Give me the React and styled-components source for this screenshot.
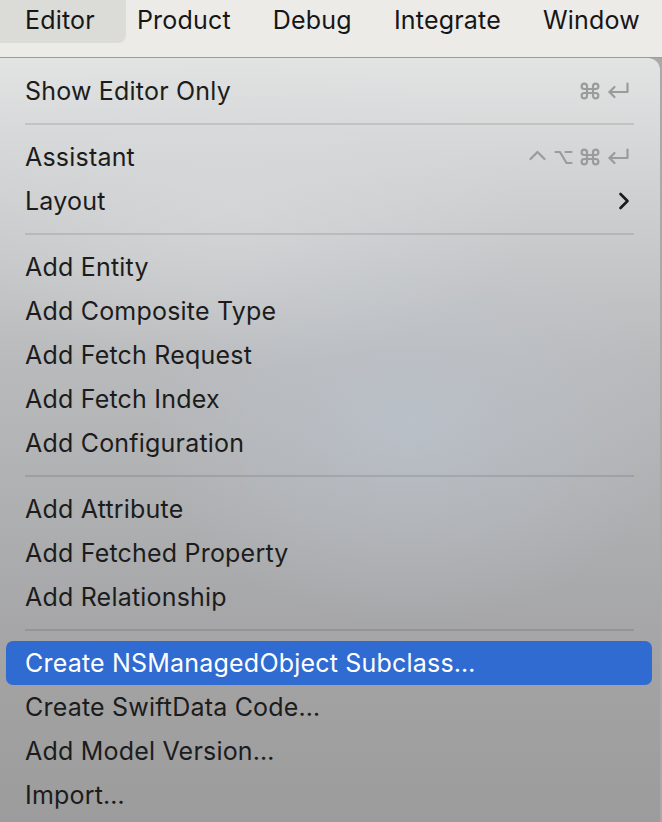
import React from "react";
import styled, { createGlobalStyle } from "styled-components";

const Global = createGlobalStyle`
  html, body { margin: 0; padding: 0; background: #a9a9a9; }
  body { font-family: Inter, "Liberation Sans", sans-serif; overflow: hidden; }
`;

const Screen = styled.div`
  width: 662px;
  height: 822px;
  overflow: hidden;
  display: flex;
  flex-direction: column;
`;

const MenuBar = styled.div`
  height: 57px;
  flex: none;
  background: #ecebe8;
  border-bottom: 1px solid #9c9c9a;
  display: flex;
  align-items: flex-start;
`;

const BarItem = styled.div`
  height: 43px;
  box-sizing: border-box;
  display: flex;
  align-items: center;
  padding: 0 ${(p) => p.$pr}px 4px ${(p) => p.$pl}px;
  font-size: 25px;
  letter-spacing: 0.2px;
  color: #161616;
  white-space: nowrap;
  background: ${(p) => (p.$active ? "#dbdbd8" : "transparent")};
  border-radius: 0 0 8px 0;
`;

const Menu = styled.div`
  flex: 1;
  width: 660px;
  border-radius: 0 12px 0 0;
  padding-top: 11px;
  display: flex;
  flex-direction: column;
  background:
    radial-gradient(ellipse 260px 200px at 62% 48%, rgba(190, 200, 212, 0.55), rgba(190, 200, 212, 0) 100%),
    radial-gradient(ellipse 300px 160px at 35% 20%, rgba(215, 218, 220, 0.6), rgba(215, 218, 220, 0) 100%),
    linear-gradient(180deg, #e2e3e3 0%, #cfd0d1 18%, #b9babc 40%, #aeafb1 60%, #a3a3a4 80%, #9c9c9c 100%);
`;

const Row = styled.div`
  height: 44px;
  flex: none;
  margin: 0 8px 0 6px;
  padding: 0 22px 0 19px;
  display: flex;
  align-items: center;
  justify-content: space-between;
  border-radius: 7px;
  font-size: 25px;
  letter-spacing: 0.2px;
  white-space: nowrap;
  color: ${(p) => (p.$selected ? "#ffffff" : "#1c1c1c")};
  background: ${(p) => (p.$selected ? "#306bd1" : "transparent")};
`;

const Separator = styled.div`
  height: 22px;
  flex: none;
  display: flex;
  align-items: center;
  padding: 0 26px 0 25px;
  &::after {
    content: "";
    flex: 1;
    height: 2px;
    background: rgba(0, 0, 0, 0.1);
  }
`;

const Shortcut = styled.div`
  display: flex;
  align-items: center;
  gap: 7px;
`;

const Glyph = ({ children, w = 19 }) => (
  <svg width={w} height="18" viewBox={`0 0 ${w} 18`} fill="none" stroke="#9b9b9b" strokeWidth="2.2" strokeLinecap="round" strokeLinejoin="round">
    {children}
  </svg>
);

const ControlIcon = () => (
  <Glyph>
    <path d="M2.5 11 L9.5 4 L16.5 11" />
  </Glyph>
);

const OptionIcon = () => (
  <Glyph>
    <path d="M1.5 4 H6 L12.5 15 H17.5" />
    <path d="M11.5 4 H17.5" />
  </Glyph>
);

const CommandIcon = () => (
  <Glyph w={20}>
    <path d="M7 7 V4.2 A2.7 2.7 0 1 0 4.2 7 H15.8 A2.7 2.7 0 1 0 13 4.2 V13.8 A2.7 2.7 0 1 0 15.8 11 H4.2 A2.7 2.7 0 1 0 7 13.8 Z" />
  </Glyph>
);

const ReturnIcon = () => (
  <Glyph w={23}>
    <path d="M20.5 1.5 V10 H2.5" />
    <path d="M7.5 5 L2.5 10 L7.5 15" />
  </Glyph>
);

const Chevron = () => (
  <svg width="12" height="18" viewBox="0 0 12 18" fill="none" stroke="#1a1a1a" strokeWidth="2.6" strokeLinecap="round" strokeLinejoin="round">
    <path d="M2.5 2 L9.5 9 L2.5 16" />
  </svg>
);

const keyIcons = { ctrl: ControlIcon, opt: OptionIcon, cmd: CommandIcon, ret: ReturnIcon };

const groups = [
  [{ label: "Show Editor Only", keys: ["cmd", "ret"] }],
  [
    { label: "Assistant", keys: ["ctrl", "opt", "cmd", "ret"] },
    { label: "Layout", sub: true },
  ],
  [
    { label: "Add Entity" },
    { label: "Add Composite Type" },
    { label: "Add Fetch Request" },
    { label: "Add Fetch Index" },
    { label: "Add Configuration" },
  ],
  [
    { label: "Add Attribute" },
    { label: "Add Fetched Property" },
    { label: "Add Relationship" },
  ],
  [
    { label: "Create NSManagedObject Subclass…", selected: true },
    { label: "Create SwiftData Code…" },
    { label: "Add Model Version…" },
    { label: "Import…" },
  ],
];

const barItems = [
  { label: "Editor", pl: 25, pr: 31, active: true },
  { label: "Product", pl: 11, pr: 21 },
  { label: "Debug", pl: 21, pr: 21 },
  { label: "Integrate", pl: 21, pr: 21 },
  { label: "Window", pl: 21, pr: 0 },
];

export default function App() {
  return (
    <Screen>
      <Global />
      <MenuBar>
        {barItems.map((b) => (
          <BarItem key={b.label} $pl={b.pl} $pr={b.pr} $active={b.active}>
            {b.label}
          </BarItem>
        ))}
      </MenuBar>
      <Menu>
        {groups.map((g, gi) => (
          <React.Fragment key={gi}>
            {gi > 0 && <Separator />}
            {g.map((item) => (
              <Row key={item.label} $selected={item.selected}>
                <span>{item.label}</span>
                {item.keys && (
                  <Shortcut>
                    {item.keys.map((k) => {
                      const Icon = keyIcons[k];
                      return <Icon key={k} />;
                    })}
                  </Shortcut>
                )}
                {item.sub && <Chevron />}
              </Row>
            ))}
          </React.Fragment>
        ))}
      </Menu>
    </Screen>
  );
}
